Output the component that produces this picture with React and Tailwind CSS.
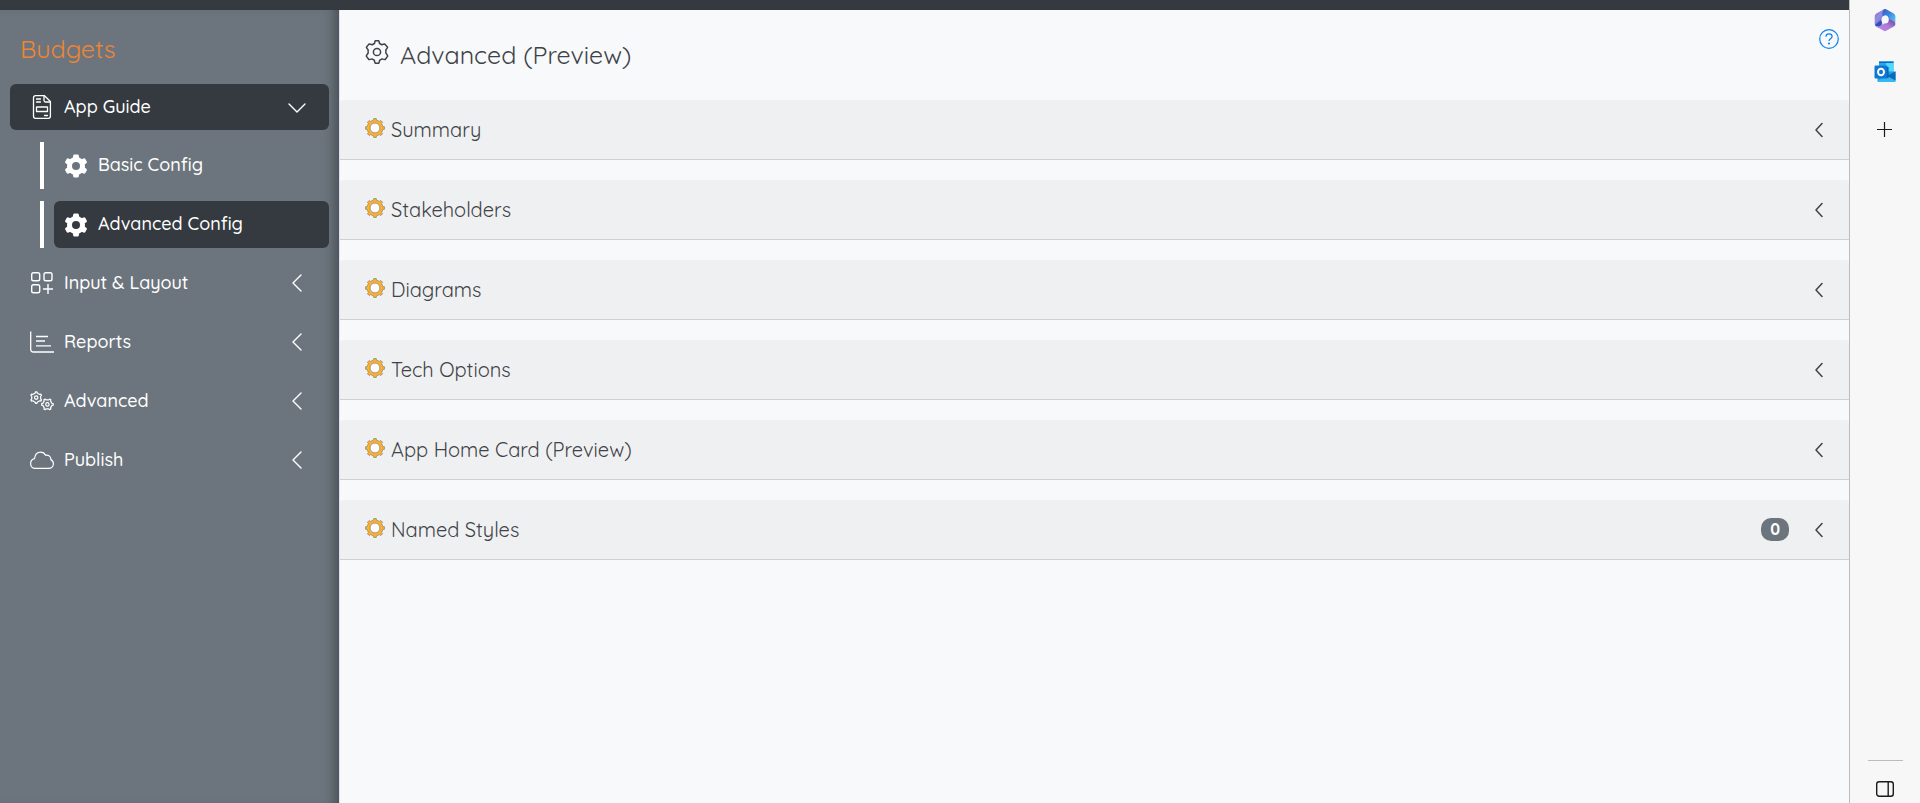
const fontStack = "font-[Quicksand,Lato,sans-serif]";

// Builds a closed gear outline centred on (cx, cy); the first tooth points up.
function gearPath(cx, cy, outer, inner, teeth, topRatio, baseRatio) {
  const step = (Math.PI * 2) / teeth;
  const at = (r, a) => `${(cx + r * Math.sin(a)).toFixed(2)} ${(cy - r * Math.cos(a)).toFixed(2)}`;
  const parts = [];
  for (let i = 0; i < teeth; i += 1) {
    const a = i * step;
    parts.push(
      at(inner, a - step * baseRatio),
      at(outer, a - step * topRatio),
      at(outer, a + step * topRatio),
      at(inner, a + step * baseRatio)
    );
  }
  return `M${parts.join("L")}Z`;
}

function SolidGear() {
  return (
    <svg viewBox="0 0 24 24" className="size-6 shrink-0" aria-hidden="true">
      <path
        d={`${gearPath(12, 12, 10.2, 7.8, 6, 0.13, 0.2)}M12 8a4 4 0 1 0 0 8a4 4 0 1 0 0-8Z`}
        fill="currentColor"
        fillRule="evenodd"
      />
      <path d={gearPath(12, 12, 10.2, 7.8, 6, 0.13, 0.2)} fill="none" stroke="currentColor" strokeWidth="3" strokeLinejoin="round" />
    </svg>
  );
}

function OutlineGear() {
  return (
    <svg viewBox="0 0 24 24" className="size-6 shrink-0" fill="none" stroke="currentColor" strokeWidth="1.5" strokeLinejoin="round" aria-hidden="true">
      <path d="M10.200.8h3.600q.6 1.200.7 2.700q1.200.5 2.300 1.300q1.600-.6 2.900-.7l2.900 3.100q-.6 1.500-1.800 2.900q.2 1.700 0 3q1.200 1.300 1.900 3l-2.500 3.400q-1.500.1-3.200-.6q-1.200.9-2.300 1.300q-.3 1.700-.9 3h-3.600q-.6-1.300-.9-3q-1.200-.5-2.300-1.300q-1.700.7-3.200.6L1.300 16.100q.7-1.700 1.900-3q-.2-1.300 0-3Q2 8.700 1.400 7.200l2.500-3.100q1.400.1 3.300.7q1.100-.8 2.300-1.300q.1-1.500.7-2.700Z" />
      <circle cx="12" cy="12" r="3.6" />
    </svg>
  );
}

function SectionCog() {
  return (
    <svg viewBox="0 0 20 20" className="size-5 shrink-0" aria-hidden="true">
      <path d={gearPath(10, 10, 9.5, 8, 8, 0.17, 0.23)} fill="#fbb034" stroke="#97886a" strokeWidth="0.8" strokeLinejoin="round" />
      <circle cx="10" cy="10" r="4.9" fill="#fff" stroke="#97886a" strokeWidth="0.8" />
    </svg>
  );
}

function FormIcon() {
  return (
    <svg viewBox="0 0 24 24" className="size-6 shrink-0" fill="none" stroke="currentColor" strokeWidth="1.3" strokeLinejoin="round" strokeLinecap="round" aria-hidden="true">
      <path d="M5.5.7h9L20.400 6.500v14.800a2 2 0 0 1-2 2h-12.900a2 2 0 0 1-2-2v-18.600a2 2 0 0 1 2-2Z" />
      <path d="M14 .9v4.600a1.500 1.500 0 0 0 1.500 1.500h4.600M6.500 4h4M6.500 7h4M14.500 20.500h3" />
      <path d="M6.500 12h11v4.500h-11Z" />
    </svg>
  );
}

function LayoutIcon() {
  return (
    <svg viewBox="0 0 24 24" className="size-6 shrink-0" fill="none" stroke="currentColor" strokeWidth="1.4" aria-hidden="true">
      <rect x="1.700" y="1.700" width="8" height="8" rx="1.800" />
      <rect x="14" y="1.700" width="8" height="8" rx="1.800" />
      <rect x="1.700" y="13.800" width="8" height="8" rx="1.800" />
      <path d="M18 13v10M13 18h10" />
    </svg>
  );
}

function ReportIcon() {
  return (
    <svg viewBox="0 0 24 24" className="size-6 shrink-0" fill="none" stroke="currentColor" strokeWidth="1.300" aria-hidden="true">
      <path d="M.7 1.500v18a2.500 2.500 0 0 0 2.500 2.500h20.800M6 6.500h12M6 11h9M6 15.800h15" />
    </svg>
  );
}

function GearsIcon() {
  return (
    <svg viewBox="0 0 24 24" className="size-6 shrink-0" fill="none" stroke="currentColor" strokeWidth="1.200" strokeLinejoin="round" aria-hidden="true">
      <path d={gearPath(6.2, 8.6, 5.8, 4.7, 6, 0.12, 0.2)} />
      <circle cx="6.2" cy="8.6" r="1.700" />
      <g transform="rotate(30 17.4 15.400)">
        <path d={gearPath(17.4, 15.4, 5.8, 4.7, 6, 0.12, 0.2)} />
      </g>
      <circle cx="17.4" cy="15.4" r="1.700" />
    </svg>
  );
}

function CloudIcon() {
  return (
    <svg viewBox="0 0 24 24" className="size-6 shrink-0" fill="none" stroke="currentColor" strokeWidth="1.200" strokeLinejoin="round" aria-hidden="true">
      <path d="M5.200 20.400a4.700 4.700 0 0 1-4.600-4.700c0-2.600 1.600-4.500 3.900-5.100C5 6.800 7.300 4.200 10.600 4.200c2.300 0 4 1.200 5 3.100c3-.7 5.500 1.400 5.200 4.300c1.600.8 2.600 2.300 2.600 4.100a4.700 4.700 0 0 1-4.700 4.700Z" />
    </svg>
  );
}

function Chevron({ open }) {
  return (
    <svg viewBox="0 0 18 18" className="size-[18px] shrink-0" fill="none" stroke="currentColor" strokeWidth="1.400" strokeLinecap="round" strokeLinejoin="round" aria-hidden="true">
      <path d={open ? "M1 6l8 8l8-8" : "M13 1L5 9l8 8"} />
    </svg>
  );
}

function SectionChevron() {
  return (
    <svg viewBox="0 0 8 16" className="h-4 w-2 shrink-0" fill="none" stroke="currentColor" strokeWidth="1.500" strokeLinecap="round" strokeLinejoin="round" aria-hidden="true">
      <path d="M7 1.500L1 8l6 6.500" />
    </svg>
  );
}

function Microsoft365Logo() {
  return (
    <svg viewBox="0 0 24 24" className="size-6" aria-hidden="true">
      <defs>
        <linearGradient id="m365-left" x1="0" y1="0" x2=".6" y2="1">
          <stop offset="0" stopColor="#7a6fe0" />
          <stop offset=".45" stopColor="#9a8ae0" />
          <stop offset="1" stopColor="#5a6fd0" />
        </linearGradient>
        <linearGradient id="m365-top" x1="0" y1="0" x2="1" y2=".8">
          <stop offset="0" stopColor="#3558c4" />
          <stop offset=".5" stopColor="#3c86dc" />
          <stop offset="1" stopColor="#58c4f2" />
        </linearGradient>
        <linearGradient id="m365-bottom" x1="0" y1="1" x2="1" y2="0">
          <stop offset="0" stopColor="#b98aec" />
          <stop offset=".5" stopColor="#b07cdc" />
          <stop offset="1" stopColor="#5b3f96" />
        </linearGradient>
      </defs>
      <path d="M11 1.300L3.300 5.600Q1.700 6.600 1.700 8.300v7.600q0 1.700 1.500 2.500l2.300 1.200q3.500.2 3.700-3.200V8.500q0-4.200 3.300-6.800Z" fill="url(#m365-left)" />
      <path d="M2 17q2.400 2.200 5.100.8q2.100-1.200 2.100-3.800v-3L5.500 14Z" fill="#3150b5" />
      <path d="M11 1.300q1-.7 2.200 0l7.600 4.300q1.600 1 1.600 2.700v7.300q-1-2.300-3.300-3.300l-3.700-2q-.3-3-3.400-3l-2.800 1.500q-.4-5 1.800-7.500Z" fill="url(#m365-top)" />
      <path d="M2.600 18q3.800 1.200 6.600-1.300l6.200-4.100q.4-.8.200-2.300l3.700 2q2.900 1.400 3.100 3.600q0 1.700-1.600 2.600l-7.600 4.300q-1.200.7-2.400 0l-7.600-4.300Z" fill="url(#m365-bottom)" />
      <circle cx="12" cy="12" r="3.600" fill="#f7f7f7" />
    </svg>
  );
}

function OutlookLogo() {
  return (
    <svg viewBox="0 0 24 24" className="size-6" aria-hidden="true">
      <path d="M6 1.500h14.500v13H6Z" fill="#28a8ea" />
      <path d="M13 1.500h7.500v11H13Z" fill="#50d9ff" />
      <path d="M6 1.500h14.500v1.500H6Z" fill="#0a6cc0" />
      <path d="M4.500 11.500h18v9.300a1.200 1.200 0 0 1-1.200 1.200H5.700a1.200 1.200 0 0 1-1.200-1.200Z" fill="#1a9fe8" />
      <path d="M22.500 11.500v9L14 16Z" fill="#1268b3" />
      <path d="M4.500 20.800L14 16l8.500 4.800q-.2 1.200-1.200 1.200H5.700q-1 0-1.200-1.200Z" fill="#35b8f1" />
      <path d="M6 7h9.500v11H6Z" fill="#0a4f8f" />
      <rect x="1.500" y="5.500" width="13" height="13" rx="1.200" fill="#0f78d4" />
      <ellipse cx="8" cy="12" rx="3" ry="3.300" fill="none" stroke="#fff" strokeWidth="1.900" />
    </svg>
  );
}

const guideLinks = [
  { label: "Basic Config", active: false },
  { label: "Advanced Config", active: true },
];

const menuItems = [
  { label: "Input & Layout", Icon: LayoutIcon },
  { label: "Reports", Icon: ReportIcon },
  { label: "Advanced", Icon: GearsIcon },
  { label: "Publish", Icon: CloudIcon },
];

const sections = [
  { title: "Summary" },
  { title: "Stakeholders" },
  { title: "Diagrams" },
  { title: "Tech Options" },
  { title: "App Home Card (Preview)" },
  { title: "Named Styles", count: 0 },
];

function MenuButton({ label, Icon, open = false }) {
  return (
    <button
      type="button"
      aria-expanded={open}
      className={`flex w-full items-center rounded-md pr-[23px] pl-5 text-left ${open ? "h-[46px] bg-[#343a40]" : "h-[47px] pb-px"}`}
    >
      <Icon />
      <span className="ml-[10px] flex-1 pb-px">{label}</span>
      <Chevron open={open} />
    </button>
  );
}

function Sidebar() {
  return (
    <nav className="w-[339px] shrink-0 bg-[#6c757d] px-[10px] text-lg font-medium text-white shadow-[inset_-12px_0_12px_-8px_rgba(33,37,41,0.5)]">
      <h2 className="px-[10px] pt-[23px] pb-[19px] text-[25px] leading-8 font-normal text-[#ee8434]">Budgets</h2>
      <div className="flex flex-col gap-3">
        <MenuButton label="App Guide" Icon={FormIcon} open />
        {guideLinks.map(({ label, active }) => (
          <div key={label} className="ml-[30px] flex h-[47px] gap-[10px] border-l-4 border-white pl-[10px]">
            <a
              href="#"
              aria-current={active ? "page" : undefined}
              className={`flex flex-1 items-center gap-[10px] rounded-md px-[10px] ${active ? "bg-[#343a40]" : ""}`}
            >
              <SolidGear />
              <span className="pb-[2px]">{label}</span>
            </a>
          </div>
        ))}
        {menuItems.map((item) => (
          <MenuButton key={item.label} {...item} />
        ))}
      </div>
    </nav>
  );
}

function SectionRow({ title, count }) {
  return (
    <button
      type="button"
      aria-expanded="false"
      className="flex h-[60px] w-full items-center rounded-t border-b border-[#cfd0d2] bg-[#eff0f2] pr-[26px] pl-[25px] text-left"
    >
      <span className="flex flex-1 items-start gap-[6px]">
        <SectionCog />
        <span className="text-xl leading-6">{title}</span>
      </span>
      {count !== undefined && (
        <span className="mr-[26px] rounded-[10px] bg-[#6c757d] px-[9px] text-base leading-[23px] font-bold text-white">
          {count}
        </span>
      )}
      <SectionChevron />
    </button>
  );
}

function EdgeBar() {
  return (
    <aside className="flex w-[71px] shrink-0 flex-col items-center border-l border-[#bcbcbc] bg-[#f7f7f7] pt-2 pb-1 text-[#1b1b1b]">
      <button type="button" aria-label="Microsoft 365"><Microsoft365Logo /></button>
      <button type="button" aria-label="Outlook" className="mt-7"><OutlookLogo /></button>
      <button type="button" aria-label="Customize" className="mt-[33px]">
        <svg viewBox="0 0 24 24" className="size-6" stroke="currentColor" strokeWidth="1.200" aria-hidden="true">
          <path d="M11.500 5v15M4 12.500h15" />
        </svg>
      </button>
      <div className="mt-auto h-px w-[35px] bg-[#bcbcbc]" />
      <button type="button" aria-label="Toggle sidebar" className="mt-[18px]">
        <svg viewBox="0 0 20 20" className="size-5" fill="none" stroke="currentColor" strokeWidth="1.400" aria-hidden="true">
          <rect x="1.700" y="2.700" width="16.600" height="14.600" rx="2.500" />
          <path d="M13.200 3v14" />
        </svg>
      </button>
    </aside>
  );
}

export default function App() {
  return (
    <div className={`flex min-h-screen ${fontStack} text-[#3f4347]`}>
      <div className="flex min-w-0 flex-1 flex-col">
        <div className="h-[10px] bg-[#343a40]" />
        <div className="flex flex-1">
          <Sidebar />
          <main className="min-w-0 flex-1 border-l border-[#dfe1e4] bg-[#f8f9fb]">
            <header className="flex h-[90px] items-start pr-[10px] pl-[25px]">
              <span className="pt-[30px]"><OutlineGear /></span>
              <h1 className="ml-[11px] flex-1 pt-[27px] text-[25px] leading-9">Advanced (Preview)</h1>
              <button type="button" aria-label="Help" className="mt-[19px] text-[#0d7ff5]">
                <svg viewBox="0 0 20 20" className="size-5" fill="none" stroke="currentColor" strokeWidth="1.200" aria-hidden="true">
                  <circle cx="10" cy="10" r="9.300" />
                  <path d="M6.900 7.700c.1-1.800 1.400-2.800 3.100-2.800s3.100 1 3.100 2.600c0 2.300-3.100 2.200-3.100 4.500" />
                  <circle cx="10" cy="14.500" r=".5" fill="currentColor" />
                </svg>
              </button>
            </header>
            <div className="flex flex-col gap-5">
              {sections.map((section) => (
                <SectionRow key={section.title} {...section} />
              ))}
            </div>
          </main>
        </div>
      </div>
      <EdgeBar />
    </div>
  );
}
